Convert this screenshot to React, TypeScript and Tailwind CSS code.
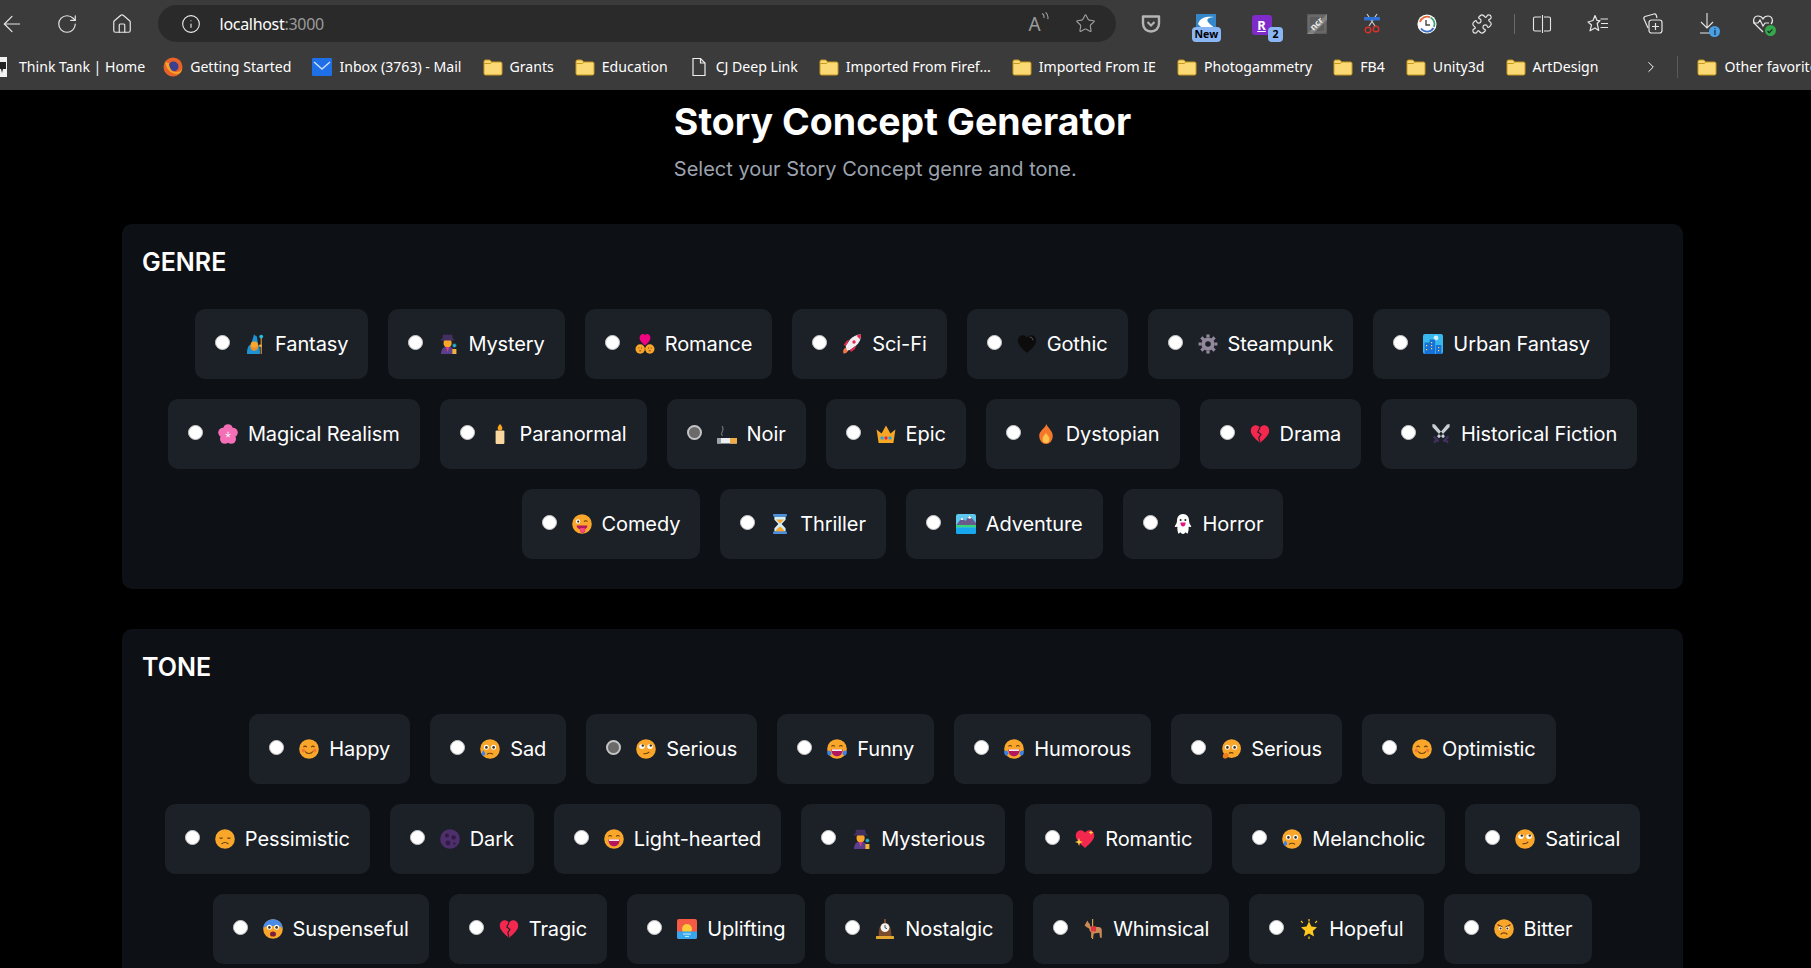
import React from 'react';
import { ArrowLeft, RotateCw, Home, Info, Star, Puzzle, ChevronRight } from 'lucide-react';

const Sv = ({ children }: { children: React.ReactNode }) => (
    <svg viewBox="0 0 20 20" className="h-5 w-5 shrink-0">{children}</svg>
);

const SKIN = '#f9a62b';
const DK = '#6b3f0a';

const Face = ({ children }: { children?: React.ReactNode }) => (
    <Sv>
        <circle cx="10" cy="10" r="9.8" fill={SKIN} />
        {children}
    </Sv>
);

const Heart = ({ fill }: { fill: string }) => (
    <path d="M10 19C4 14 .8 10.6.8 6.6.8 3.4 3.2 1.2 5.8 1.2c1.8 0 3.2 1 4.2 2.6 1-1.6 2.4-2.6 4.2-2.6 2.6 0 5 2.2 5 5.4 0 4-3.2 7.4-9.2 12.4z" fill={fill} />
);

const Smile = (
    <>
        <path d="M4.5 8.2c.8-1.4 2.4-1.4 3.2 0M12.3 8.2c.8-1.4 2.4-1.4 3.2 0" stroke={DK} strokeWidth="1.1" fill="none" />
        <circle cx="4.4" cy="11.6" r="1.8" fill="#f0653a" opacity=".7" />
        <circle cx="15.6" cy="11.6" r="1.8" fill="#f0653a" opacity=".7" />
        <path d="M6.2 12.5c1.6 2.6 6 2.6 7.6 0" stroke={DK} strokeWidth="1.1" fill="none" />
    </>
);

const WideEyes = (
    <>
        <circle cx="6.4" cy="8.2" r="2.5" fill="#fff" />
        <circle cx="13.6" cy="8.2" r="2.5" fill="#fff" />
        <circle cx="6.4" cy="8.4" r="1.3" fill="#3b2a14" />
        <circle cx="13.6" cy="8.4" r="1.3" fill="#3b2a14" />
    </>
);

const RollEyes = (
    <>
        <ellipse cx="6" cy="7.6" rx="2.8" ry="2.3" fill="#fff" />
        <ellipse cx="14" cy="7.6" rx="2.8" ry="2.3" fill="#fff" />
        <circle cx="6.8" cy="6.6" r="1.2" fill="#3b2a14" />
        <circle cx="14.8" cy="6.6" r="1.2" fill="#3b2a14" />
        <path d="M7.5 14.6c2.4.4 4.4-.2 5.8-1.8" stroke={DK} strokeWidth="1.1" fill="none" />
    </>
);

const Joy = (
    <>
        <path d="M4.5 7.6c.8-1.4 2.4-1.4 3.2 0M12.3 7.6c.8-1.4 2.4-1.4 3.2 0" stroke={DK} strokeWidth="1.1" fill="none" />
        <path d="M4.4 10.4h11.2c0 4-2.2 6.8-5.6 6.8s-5.6-2.8-5.6-6.8z" fill="#b3175e" />
        <path d="M5 10.4h10v1.5H5z" fill="#fff" />
        <path d="M.4 12.2c1.6-.8 3-.4 3.8 1 .6 1.6-.4 3.2-2 3.4-1.6-.4-2.4-2.6-1.8-4.4zM19.6 12.2c-1.6-.8-3-.4-3.8 1-.6 1.6.4 3.2 2 3.4 1.6-.4 2.4-2.6 1.8-4.4z" fill="#3b82e6" />
    </>
);

const SadTear = (
    <>
        {WideEyes}
        <path d="M7 15.4c1.6-1.6 4.4-1.6 6 0" stroke={DK} strokeWidth="1.1" fill="none" />
        <path d="M3.4 11.4c1.2 1.6 1.8 2.6 1.8 3.6a1.8 1.8 0 0 1-3.6 0c0-1 .6-2 1.8-3.6z" fill="#3b82e6" />
    </>
);

const Broken = (
    <Sv>
        <Heart fill="#f4284f" />
        <path d="M10 3.6 7.8 8l3.2 2.4-2.2 3.2 1.2 5" stroke="#1c2128" strokeWidth="1.1" fill="none" />
    </Sv>
);

const Detective = (
    <Sv>
        <path d="M3 20c0-5 2.6-7.4 6.6-7.4s6.6 2.4 6.6 7.4z" fill="#5b3f8c" />
        <path d="M8 13l1.6 5 1.6-5z" fill="#e33b86" />
        <rect x="5.6" y="5" width="8" height="8" rx="3.6" fill={SKIN} />
        <path d="M5 .8h9.2l.8 5H4.2z" fill="#443060" />
        <rect x="2.6" y="5" width="14" height="1.6" rx=".8" fill="#443060" />
        <circle cx="16.4" cy="11.6" r="2" fill="#1fb6d8" stroke="#333" strokeWidth=".6" />
        <rect x="14.4" y="15" width="4" height="5" fill="#f2b33d" />
    </Sv>
);

const EMOJI: Record<string, React.ReactNode> = {
    fantasy: (
        <Sv>
            <path d="M2 20c0-6 1.6-9 4-9.4L9 .6l3 2.2 1 7.800c1.600 1.400 2 4 2 9.400z" fill="#1f92d1" />
            <rect x="5.6" y="7.6" width="7.4" height="8.4" rx="3.4" fill={SKIN} />
            <path d="M5.600 11.400c0 4 1.400 5.400 3.600 5.400s3.800-1.400 3.800-5.400c-1 1.800-2 2-3.800 2s-2.600-.4-3.600-2z" fill="#e8912a" />
            <rect x="15.6" y="3" width="1.3" height="17" fill="#c98a3a" />
            <circle cx="16.2" cy="2.6" r="1.900" fill="#1fc1e0" />
            <rect x="14" y="10.6" width="3" height="2.4" rx="1" fill={SKIN} />
        </Sv>
    ),
    mystery: Detective,
    romance: (
        <Sv>
            <path d="M10 11.400C5.600 8 4.600 5.800 4.600 3.800 4.600 1.600 6.400 0 8 0c.8 0 1.600.4 2 1.400C10.400.4 11.200 0 12 0c1.600 0 3.400 1.600 3.400 3.800 0 2-1 4.200-5.400 7.600z" fill="#f0047f" />
            <circle cx="5.200" cy="15" r="4.700" fill={SKIN} />
            <circle cx="14.800" cy="15" r="4.700" fill={SKIN} />
            <path d="M3.400 14h1M6 14h1M13 14h1M15.600 14h1M4.200 16.800h2M13.800 16.800h2" stroke={DK} strokeWidth=".9" />
        </Sv>
    ),
    rocket: (
        <Sv>
            <path d="M1.400 19.600c-.8-3.400.4-5.600 2.600-6l2.200 2.400c-.2 2-2.200 3.800-4.800 3.600z" fill="#f2764b" />
            <path d="M5 16.400 3.600 12 8 5.400C10.600 2.400 14.400.4 19 .4c.2 4.600-1.600 8.400-4.800 11L8 16z" fill="#f3eef2" />
            <path d="M19 .4c0 1.800-.2 3.400-1 4.800L14.600 1.800c1.200-.8 2.800-1.400 4.400-1.400z" fill="#e8284f" />
            <circle cx="12" cy="8" r="1.700" fill="#e8284f" />
            <path d="M3.600 12 1.600 11l3-4 3-1.600zM8 16l1 2 4-3 1.400-3.400z" fill="#e8284f" />
        </Sv>
    ),
    blackHeart: (
        <Sv>
            <Heart fill="#0c0c0c" />
            <path d="M12.600 3c2 0 3.400 1.400 3.400 3.400" stroke="#555" strokeWidth="1" fill="none" />
        </Sv>
    ),
    gear: (
        <Sv>
            <path d="M10 .6v3M10 16.400v3M.6 10h3M16.400 10h3M3.400 3.400l2.200 2.200M14.400 14.400l2.200 2.200M16.600 3.400l-2.200 2.200M5.600 14.400l-2.200 2.200" stroke="#94899c" strokeWidth="3.200" />
            <circle cx="10" cy="10" r="6.600" fill="#94899c" />
            <circle cx="10" cy="10" r="2.800" fill="#1c2128" />
        </Sv>
    ),
    city: (
        <Sv>
            <rect x="0" y="0" width="20" height="20" rx="2" fill="#37b8ee" />
            <circle cx="13" cy="4" r="2.400" fill="#cfeffb" />
            <path d="M1.600 20V8.600h5V5.600h5.600V20zM13 20v-9h5.400v9z" fill="#1670d8" />
            <path d="M3 11h1.200v1.200H3zM8 8h1.200v1.200H8zM8 11h1.200v1.200H8zM8 14h1.200v1.200H8zM3 15h1.200v1.200H3zM15 13h1.200v1.200H15zM15 16h1.200v1.200H15z" fill="#ffd75e" />
        </Sv>
    ),
    blossom: (
        <Sv>
            <circle cx="10" cy="5" r="4.800" fill="#f56fb7" />
            <circle cx="5" cy="8.600" r="4.800" fill="#f56fb7" />
            <circle cx="15" cy="8.600" r="4.800" fill="#f56fb7" />
            <circle cx="6.800" cy="15" r="4.800" fill="#f56fb7" />
            <circle cx="13.200" cy="15" r="4.800" fill="#f56fb7" />
            <path d="M10 7.600v3M7.600 10.400 10 11l2.400-.6M8.600 13.200 10 11l1.400 2.200" stroke="#fff" strokeWidth="1" fill="none" />
        </Sv>
    ),
    candle: (
        <Sv>
            <rect x="5.600" y="6.600" width="8.800" height="13.400" rx="1" fill="#fbd7a0" />
            <path d="M10 0c1.800 2 2.400 3.200 2.400 4.200a2.400 2.400 0 0 1-4.800 0c0-1 .6-2.200 2.400-4.200z" fill="#f8a51b" />
        </Sv>
    ),
    cigarette: (
        <Sv>
            <rect x="0" y="14" width="20" height="5.600" rx="1" fill="#eceff1" />
            <rect x="0" y="14" width="4" height="5.600" fill="#9ea3a8" />
            <rect x="13" y="14" width="7" height="5.600" fill="#f2ab4a" />
            <path d="M5.400 11.800c-2.600-3 2.400-5-.2-9.600" stroke="#8d9094" strokeWidth="1" fill="none" />
        </Sv>
    ),
    crown: (
        <Sv>
            <path d="M.6 5.600 5.600 9.600 10 1.400l4.400 8.200 5-4L17.400 19H2.600z" fill="#f7a724" />
            <circle cx="6" cy="14" r="1.700" fill="#29a8e0" />
            <circle cx="10" cy="14" r="1.700" fill="#e8284f" />
            <circle cx="14" cy="14" r="1.700" fill="#29a8e0" />
        </Sv>
    ),
    fire: (
        <Sv>
            <path d="M10.400 0c.8 3.400 6.400 6.400 6.400 12a6.800 8 0 0 1-13.600 0c0-5.400 6-7.800 7.200-12z" fill="#f4772b" />
            <path d="M10 8.400c.6 2 3.400 3.600 3.400 6.600a3.400 4 0 0 1-6.800 0c0-2.800 2.800-4.400 3.400-6.600z" fill="#fcc44a" />
        </Sv>
    ),
    broken: Broken,
    swords: (
        <Sv>
            <path d="M1.400 0 4 .6l10 11.600-2 2L1.400 3zM18.600 0 16 .6 6 12.200l2 2L18.600 3z" fill="#c9ced4" />
            <path d="M2.600 12.400l5 5M17.400 12.400l-5 5M3 18.600l2.600-2.600M17 18.600 14.400 16" stroke="#43305e" strokeWidth="2.200" />
        </Sv>
    ),
    comedy: (
        <Face>
            <circle cx="6" cy="7.400" r="2.200" fill="#fff" />
            <circle cx="6.200" cy="7.600" r="1.100" fill="#3b2a14" />
            <path d="M12 7.600c1-1.200 2.400-1.200 3.400 0" stroke={DK} strokeWidth="1.100" fill="none" />
            <path d="M4.600 11.400h10.800c0 1.600-1 3-2.200 3.600.2 2.400-.8 4-2.600 4s-2.600-1.800-2.400-3.600c-2.200-.6-3.600-2.200-3.600-4z" fill="#b3175e" />
            <path d="M8 14.600c.4-.8 4.400-.8 5 0 .2 2.400-.8 4.400-2.600 4.400S7.800 17 8 14.600z" fill="#f6487f" />
        </Face>
    ),
    hourglass: (
        <Sv>
            <path d="M4.400 2.400h11.200v3.400L11.600 10l4 4.200v3.400H4.400v-3.400L8.400 10 4.400 5.800z" fill="#cfeffb" />
            <path d="M6 5.400h8L10 9.600zM5.600 17.400c.4-2.400 2.400-3.600 4.400-5 2 1.400 4 2.600 4.400 5z" fill="#f9a62b" />
            <rect x="3" y="0" width="14" height="2.600" rx="1" fill="#4a8fe0" />
            <rect x="3" y="17.400" width="14" height="2.600" rx="1" fill="#4a8fe0" />
        </Sv>
    ),
    adventure: (
        <Sv>
            <rect x="0" y="0" width="20" height="20" rx="2" fill="#5cc7ef" />
            <path d="M0 11.400 6 3.400l3.400 3.600L13.600 1.600 20 9v2.600z" fill="#6a5a8c" />
            <path d="M4.400 5.400 6 3.400l1.800 2-1.800.6zM11.800 4l1.800-2.400L15.600 4l-1.800.8z" fill="#fff" />
            <rect x="0" y="11" width="20" height="2.400" fill="#37d67a" />
            <path d="M0 13.400h20V18a2 2 0 0 1-2 2H2a2 2 0 0 1-2-2z" fill="#16a7ee" />
        </Sv>
    ),
    ghost: (
        <Sv>
            <path d="M10 0c4 0 6 3 6 6.600 0 2 .8 3.800 2.400 5.800-.8.600-1.800.6-2.800.4.2 2.600-.2 4.800-1 7-1-.4-1.600-1-2-1.600-.6.8-1 1.400-2.600 1.800-1.600-.4-2-1-2.600-1.800-.4.6-1 1.200-2 1.600-.8-2.200-1.200-4.400-1-7-1 .2-2 .2-2.800-.4C3.200 10.400 4 8.600 4 6.600 4 3 6 0 10 0z" fill="#fff" />
            <circle cx="7.600" cy="6" r="1" fill="#222" />
            <circle cx="12.400" cy="6" r="1" fill="#222" />
            <path d="M7.400 8.600h5.200c0 2.400-1.200 4-2.600 4s-2.600-1.600-2.600-4z" fill="#e3147d" />
        </Sv>
    ),
    happy: <Face>{Smile}</Face>,
    sad: <Face>{SadTear}</Face>,
    roll: <Face>{RollEyes}</Face>,
    joy: <Face>{Joy}</Face>,
    think: (
        <Sv>
            <circle cx="10.600" cy="9.600" r="9.400" fill={SKIN} />
            {WideEyes}
            <path d="M8 14.200c1.400-.8 3-.8 4.400 0" stroke={DK} strokeWidth="1.100" fill="none" />
            <path d="M3 14.600c2-1 4.200-.6 4.600 1 .2 2-1 3.800-2.800 4-2 .2-3-1-3-2.400.2-1 .4-1.800 1.200-2.600z" fill="#ef7a1e" />
        </Sv>
    ),
    down: (
        <Face>
            <path d="M4.600 8.600c.8 1 2 1 3 .2M12.400 8.800c1 .8 2.200.8 3-.2" stroke={DK} strokeWidth="1.100" fill="none" />
            <path d="M6.600 15c1.800-2 5-2 6.800 0" stroke={DK} strokeWidth="1.200" fill="none" />
        </Face>
    ),
    moon: (
        <Sv>
            <circle cx="10" cy="10" r="9.800" fill="#4f2f6b" />
            <circle cx="7" cy="6.400" r="2" fill="#2f1b45" />
            <circle cx="13.600" cy="8.400" r="2.200" fill="#2f1b45" />
            <circle cx="8" cy="14" r="2.400" fill="#2f1b45" />
            <circle cx="14.400" cy="14.600" r="1.200" fill="#2f1b45" />
        </Sv>
    ),
    grin: (
        <Face>
            <path d="M4.500 7.600c.8-1.400 2.400-1.400 3.200 0M12.300 7.600c.8-1.400 2.400-1.400 3.200 0" stroke={DK} strokeWidth="1.100" fill="none" />
            <path d="M4.400 10.400h11.200c0 4-2.200 6.800-5.600 6.800s-5.600-2.800-5.600-6.800z" fill="#b3175e" />
            <path d="M5 10.400h10v1.500H5z" fill="#fff" />
        </Face>
    ),
    sparkHeart: (
        <Sv>
            <Heart fill="#f4284f" />
            <path d="M4 9 5 12l3 1-3 1-1 3-1-3-3-1 3-1zM16 1l.7 1.800 1.800.7-1.800.7L16 6l-.7-1.800-1.800-.7 1.800-.7z" fill="#ffd23f" />
        </Sv>
    ),
    fear: (
        <Face>
            <path d="M.2 10C.2 4 4.600.2 10 .2S19.800 4 19.800 10c-1.600-2.200-2.800-3-4-3H4.200c-1.200 0-2.400.8-4 3z" fill="#4a8be8" />
            {WideEyes}
            <ellipse cx="10" cy="15" rx="3" ry="2.600" fill="#7a1f3d" />
        </Face>
    ),
    sunrise: (
        <Sv>
            <rect x="0" y="0" width="20" height="20" rx="2" fill="#f55a45" />
            <circle cx="10" cy="10" r="5" fill="#ffc93c" />
            <path d="M0 12.400h20V18a2 2 0 0 1-2 2H2a2 2 0 0 1-2-2z" fill="#37a6ee" />
            <path d="M6 15h8M8 17.400h4" stroke="#cfeffb" strokeWidth="1" />
        </Sv>
    ),
    clock: (
        <Sv>
            <path d="M3.600 17c0-4 .6-8 2-10.400C6.600 4.800 8 4 10 4s3.400.8 4.400 2.600c1.400 2.400 2 6.400 2 10.400z" fill="#7a4a2a" />
            <circle cx="10" cy="8.600" r="4.400" fill="#f4f4f4" />
            <path d="M10 6v2.800l2 .8" stroke="#333" strokeWidth=".9" fill="none" />
            <rect x="9" y="0" width="2" height="4" fill="#7a4a2a" />
            <rect x="1" y="17" width="18" height="3" rx=".6" fill="#e3a72f" />
        </Sv>
    ),
    horse: (
        <Sv>
            <rect x="9" y="0" width="1.200" height="20" fill="#d8a03a" />
            <path d="M1.600 6.600 4.400 1.600l1 1.800c1.400.8 1.800 2.200 1.800 4L15.400 8c2.400 0 3.400 1.400 3.400 3.400v7.400h-1.800l-.6-5-5.600.6-1 4.400H8l.2-5.200c-1.200-.8-1.800-2-1.800-3.800L3.800 8.200z" fill="#c98a54" />
            <rect x="8" y="7.400" width="5" height="5" fill="#e5323f" />
        </Sv>
    ),
    star: (
        <Sv>
            <path d="M10 2.600 12.400 7.600l5.600.6-4.200 3.700 1.300 5.700L10 14.600l-5.100 3 1.300-5.700L2 8.200l5.600-.6z" fill="#ffc91f" />
            <path d="M10 0v2.400M2 2l1.800 1.800M18 2l-1.800 1.800M10 17.600V20" stroke="#ffc91f" strokeWidth="1.200" />
        </Sv>
    ),
    angry: (
        <Face>
            <path d="M3.600 5.600 8.400 8M16.400 5.600 11.600 8" stroke={DK} strokeWidth="1.200" />
            <circle cx="6.400" cy="9.400" r="1.800" fill="#fff" />
            <circle cx="13.600" cy="9.400" r="1.800" fill="#fff" />
            <circle cx="6.600" cy="9.600" r="1" fill="#3b2a14" />
            <circle cx="13.400" cy="9.600" r="1" fill="#3b2a14" />
            <path d="M6.600 15.400c1.800-2 5-2 6.800 0" stroke={DK} strokeWidth="1.200" fill="none" />
        </Face>
    ),
};

const GENRES: [string, string, boolean?][] = [
    ['Fantasy', 'fantasy'], ['Mystery', 'mystery'], ['Romance', 'romance'], ['Sci-Fi', 'rocket'],
    ['Gothic', 'blackHeart'], ['Steampunk', 'gear'], ['Urban Fantasy', 'city'], ['Magical Realism', 'blossom'],
    ['Paranormal', 'candle'], ['Noir', 'cigarette', true], ['Epic', 'crown'], ['Dystopian', 'fire'],
    ['Drama', 'broken'], ['Historical Fiction', 'swords'], ['Comedy', 'comedy'], ['Thriller', 'hourglass'],
    ['Adventure', 'adventure'], ['Horror', 'ghost'],
];

const TONES: [string, string, boolean?][] = [
    ['Happy', 'happy'], ['Sad', 'sad'], ['Serious', 'roll', true], ['Funny', 'joy'], ['Humorous', 'joy'],
    ['Serious', 'think'], ['Optimistic', 'happy'], ['Pessimistic', 'down'], ['Dark', 'moon'], ['Light-hearted', 'grin'],
    ['Mysterious', 'mystery'], ['Romantic', 'sparkHeart'], ['Melancholic', 'sad'], ['Satirical', 'roll'],
    ['Suspenseful', 'fear'], ['Tragic', 'broken'], ['Uplifting', 'sunrise'], ['Nostalgic', 'clock'],
    ['Whimsical', 'horse'], ['Hopeful', 'star'], ['Bitter', 'angry'],
];

function OptionGroup({ title, items }: { title: string; items: [string, string, boolean?][] }) {
    return (
        <section className="rounded-[10px] bg-[#0d1015] px-5 pt-[22px] pb-[30px]">
            <h2 className="mb-[31px] text-[25px] leading-8 font-semibold text-white">{title}</h2>
            <div className="flex flex-wrap justify-center gap-5">
                {items.map(([label, icon, checked], i) => (
                    <label key={label + i} className="flex h-[70px] items-center rounded-[10px] bg-[#1c2128] px-5 text-xl tracking-[-0.1px] text-white">
                        <input
                            type="radio"
                            name={title}
                            defaultChecked={checked}
                            className="-mt-1 mr-[15px] h-[15px] w-[15px] shrink-0 appearance-none rounded-full border border-[#c8c8c8] bg-white checked:border-2 checked:border-[#c4c4c4] checked:bg-[#6a6a6a]"
                        />
                        <span className="mr-[10px]">{EMOJI[icon]}</span>
                        {label}
                    </label>
                ))}
            </div>
        </section>
    );
}

const Folder = () => (
    <svg viewBox="0 0 20 20" className="h-5 w-5 shrink-0">
        <path d="M1 4.500A1.500 1.500 0 0 1 2.500 3h4.200l2 2h8.800A1.500 1.500 0 0 1 19 6.500v10a1.500 1.500 0 0 1-1.500 1.500h-15A1.500 1.500 0 0 1 1 16.500z" fill="#fbd975" stroke="#c7991d" strokeWidth="1" />
        <path d="M1.500 6.500h6l1.400-1.500" stroke="#c7991d" strokeWidth="1" fill="none" />
    </svg>
);

const BOOKMARKS: [string, string][] = [
    ['Getting Started', 'firefox'], ['Inbox (3763) - Mail', 'mail'], ['Grants', 'folder'], ['Education', 'folder'],
    ['CJ Deep Link', 'doc'], ['Imported From Firef...', 'folder'], ['Imported From IE', 'folder'], ['Photogammetry', 'folder'],
    ['FB4', 'folder'], ['Unity3d', 'folder'], ['ArtDesign', 'folder'],
];

function BookmarkIcon({ kind }: { kind: string }) {
    if (kind === 'firefox') {
        return (
            <svg viewBox="0 0 20 20" className="h-5 w-5 shrink-0">
                <circle cx="10" cy="10" r="9.500" fill="#e8622a" />
                <circle cx="10.500" cy="9.500" r="5" fill="#3a3f8f" />
                <path d="M2 5c1 6 5 12 12 12 3 0 5-3 5-6-1 3-3 4-6 4-4 0-7-4-7-9z" fill="#f7a425" />
            </svg>
        );
    }
    if (kind === 'mail') {
        return (
            <svg viewBox="0 0 20 20" className="h-5 w-5 shrink-0">
                <rect x="0" y="1" width="20" height="18" rx="1" fill="#1f6fe8" />
                <path d="M2 5l8 7 8-7" stroke="#cfe0fa" strokeWidth="1.400" fill="none" />
            </svg>
        );
    }
    if (kind === 'doc') {
        return (
            <svg viewBox="0 0 20 20" className="h-5 w-5 shrink-0">
                <path d="M4 1.500h7.500L16 6v12.500H4z" fill="none" stroke="#eee" strokeWidth="1.200" />
                <path d="M11.500 1.500V6H16" fill="none" stroke="#eee" strokeWidth="1.200" />
            </svg>
        );
    }
    return <Folder />;
}

function Bookmark({ label, kind }: { label: string; kind: string }) {
    return (
        <div className="flex shrink-0 items-center gap-[7px]">
            <BookmarkIcon kind={kind} />
            <span>{label}</span>
        </div>
    );
}

const Slot = ({ children }: { children: React.ReactNode }) => (
    <div className="relative flex h-full w-[55.200px] shrink-0 items-center justify-center">{children}</div>
);

const IC = 'h-[22px] w-[22px] text-[#e6e6e6]';

function BrowserChrome() {
    return (
        <div className="h-[90px] shrink-0 overflow-hidden bg-[#3b3b3b] font-['Noto_Sans',sans-serif] text-white">
            <div className="flex h-[46px] items-center pt-[1px]">
                <div className="-ml-4 flex h-full">
                    <Slot><ArrowLeft className="h-[26px] w-[26px] text-[#e6e6e6]" strokeWidth={1.100} /></Slot>
                    <Slot><RotateCw className={IC} strokeWidth={1.300} /></Slot>
                    <Slot><Home className={IC} strokeWidth={1.300} /></Slot>
                </div>
                <div className="ml-[8px] flex h-[37px] w-[958px] shrink-0 items-center rounded-full bg-[#2a2a2a] pl-[23px] pr-[20px]">
                    <Info className="h-5 w-5 text-[#eee]" strokeWidth={1.300} />
                    <span className="ml-[19px] text-[16px] tracking-[-0.3px] text-white">localhost<span className="text-[#9a9a9a]">:3000</span></span>
                    <div className="ml-auto flex items-center gap-[25px] text-[#9c9c9c]">
                        <div className="flex items-start">
                            <span className="text-[19px] leading-6">A</span>
                            <svg viewBox="0 0 8 10" className="h-[12px] w-[9px]"><path d="M1 1c1.500 1 2 2.500 1.500 4M4 0c2 1.500 2.600 3.500 2 6" stroke="#9c9c9c" fill="none" /></svg>
                        </div>
                        <Star className="h-[21px] w-[21px]" strokeWidth={1.300} />
                    </div>
                </div>
                <div className="ml-2 flex h-full">
                    <Slot>
                        <svg viewBox="0 0 20 20" className="h-5 w-5">
                            <path d="M2 2.500h16v7c0 5-3.600 8-8 8s-8-3-8-8z" fill="none" stroke="#b5b5b5" strokeWidth="2.400" strokeLinejoin="round" />
                            <path d="M6.500 8 10 11.500 13.500 8" fill="none" stroke="#b5b5b5" strokeWidth="2" />
                        </svg>
                    </Slot>
                    <Slot>
                        <svg viewBox="0 0 20 14" className="absolute top-[13px] h-[14px] w-5">
                            <rect width="20" height="14" fill="#3587c9" />
                            <path d="M2 10C4 3 12 2 18 3c-5 .5-8 2-6 5 1 2 4 3 6 6H6z" fill="#fff" />
                        </svg>
                        <span className="absolute top-[26px] rounded-[4px] bg-[#8ab6f4] px-[3px] text-[10.500px] font-bold leading-[15px] text-black">New</span>
                    </Slot>
                    <Slot>
                        <span className="absolute top-[14px] flex h-5 w-5 items-center justify-center rounded-[3px] bg-[#7e2bc9] text-[13px] font-bold leading-none text-white underline">R</span>
                        <span className="absolute left-[34px] top-[26px] flex h-[15px] w-[15px] items-center justify-center rounded-[4px] bg-[#8ab6f4] text-[10.500px] font-bold leading-none text-black">2</span>
                    </Slot>
                    <Slot>
                        <svg viewBox="0 0 20 20" className="h-5 w-5">
                            <rect width="20" height="20" fill="#5c5c5c" />
                            <path d="M0 20 20 0v6L6 20z" fill="#8a8a8a" />
                            <path d="M2 2h16v16H2z" fill="none" stroke="#777" />
                        </svg>
                        <span className="absolute -rotate-45 text-[9px] font-bold leading-none text-[#e8e8e8]">ncr</span>
                    </Slot>
                    <Slot>
                        <svg viewBox="0 0 20 22" className="h-[22px] w-5">
                            <path d="M5 1l8 12M15 1 7 13" stroke="#ccc" strokeWidth="1.200" />
                            <rect x="2" y="4" width="16" height="3.400" fill="#2e72d8" />
                            <circle cx="6" cy="17" r="2.800" fill="none" stroke="#d8322d" strokeWidth="1.400" />
                            <circle cx="14" cy="16" r="2.800" fill="none" stroke="#d8322d" strokeWidth="1.400" />
                        </svg>
                    </Slot>
                    <Slot>
                        <svg viewBox="0 0 20 20" className="h-5 w-5">
                            <circle cx="10" cy="10" r="9.600" fill="#fff" />
                            <path d="M3 8a7.500 7.500 0 0 1 10-4.800" stroke="#e56b3c" strokeWidth="1.800" fill="none" />
                            <path d="M13.500 3.500A7.500 7.500 0 0 1 17 13" stroke="#3ba37e" strokeWidth="1.800" fill="none" />
                            <path d="M16.500 14A7.500 7.500 0 0 1 4 14.500" stroke="#3a6fc4" strokeWidth="1.800" fill="none" />
                            <path d="M9 6v5h4" stroke="#444" strokeWidth="1.400" fill="none" />
                        </svg>
                    </Slot>
                    <Slot><Puzzle className={IC} strokeWidth={1.300} /></Slot>
                </div>
                <div className="ml-1 h-[20px] w-px shrink-0 bg-[#6a6a6a]" />
                <div className="flex h-full">
                    <Slot>
                        <svg viewBox="0 0 20 20" className="h-5 w-5" fill="none" stroke="#e6e6e6" strokeWidth="1.100">
                            <path d="M9 3H3a1.500 1.500 0 0 0-1.500 1.500v11A1.500 1.500 0 0 0 3 17h6M12 3h5a1.500 1.500 0 0 1 1.500 1.500v11A1.500 1.500 0 0 1 17 17h-5M10.500 1v18" />
                        </svg>
                    </Slot>
                    <Slot>
                        <svg viewBox="0 0 22 20" className="h-5 w-[22px]" fill="none" stroke="#e6e6e6" strokeWidth="1.200">
                            <path d="M8 1.500l2 5h3l-2.800 3 1.500 7-3.700-2.500-5 2.800 1.500-5.800L1 8l5-1.500z" strokeLinejoin="round" />
                            <path d="M13.500 5H21M14 9.500h7M13.500 13.500H21" />
                        </svg>
                    </Slot>
                    <Slot>
                        <svg viewBox="0 0 22 22" className="h-[22px] w-[22px]" fill="none" stroke="#e6e6e6" strokeWidth="1.200">
                            <path d="M6 15 2 6c-.5-1 0-2 1-2.500L12 1c1-.2 1.800.2 2.200 1L15 5" />
                            <rect x="7" y="7" width="13" height="13" rx="2.500" />
                            <path d="M13.500 10v7M10 13.500h7" />
                        </svg>
                    </Slot>
                    <Slot>
                        <svg viewBox="0 0 22 24" className="h-6 w-[22px]" fill="none" stroke="#e6e6e6" strokeWidth="1.100">
                            <path d="M10 1v15M4 10l6 6 6-6M3 21h14" />
                        </svg>
                        <span className="absolute left-[29px] top-[25px] flex h-[11px] w-[11px] items-center justify-center rounded-full bg-[#4aa0e6] text-[8px] font-bold leading-none text-[#12324f]">i</span>
                    </Slot>
                    <Slot>
                        <svg viewBox="0 0 22 20" className="h-5 w-[22px]" fill="none" stroke="#e6e6e6" strokeWidth="1.200">
                            <path d="M11 18 3 10C0 7 2 2 6 2c2 0 4 1 5 3 1-2 3-3 5-3 4 0 6 5 3 8" />
                            <path d="M1 9h5l2-3 3 6 2-3h4" />
                        </svg>
                        <span className="absolute left-[29px] top-[24px] flex h-[11px] w-[11px] items-center justify-center rounded-full bg-[#36a84a]">
                            <svg viewBox="0 0 10 10" className="h-2 w-2"><path d="M2 5l2 2 4-4" stroke="#123" strokeWidth="1.400" fill="none" /></svg>
                        </span>
                    </Slot>
                    <Slot>
                        <span className="ml-[48px] h-[3px] w-[3px] rounded-full bg-[#e6e6e6]" />
                    </Slot>
                </div>
            </div>
            <div className="-mt-[1px] flex h-[44px] items-center whitespace-nowrap text-[14.100px]">
                <svg viewBox="0 0 20 20" className="-ml-[13px] mr-[12px] h-5 w-5 shrink-0">
                    <rect width="20" height="20" fill="#f2f2f2" />
                    <path d="M13 5h6v7h-3l-1 4-1-4h-1z" fill="#222" />
                </svg>
                <span className="mr-[18px]">Think Tank | Home</span>
                <div className="flex gap-[21px]">
                    {BOOKMARKS.map(([label, kind]) => <Bookmark key={label} label={label} kind={kind} />)}
                </div>
                <ChevronRight className="ml-[44px] h-[18px] w-[18px] shrink-0" strokeWidth={1.300} />
                <div className="ml-[17px] mr-[19px] h-[22px] w-px shrink-0 bg-[#5a5a5a]" />
                <Bookmark label="Other favorites" kind="folder" />
            </div>
        </div>
    );
}

export default function App() {
    return (
        <div className="flex h-screen flex-col overflow-hidden bg-black font-['Inter',sans-serif]">
            <BrowserChrome />
            <main className="pl-[122px] pr-[128px]">
                <div className="flex justify-center pt-3">
                    <div>
                        <h1 className="text-[37.500px] leading-10 font-bold text-white">Story Concept Generator</h1>
                        <p className="mt-[13px] text-xl text-[#9ca3af]">Select your Story Concept genre and tone.</p>
                    </div>
                </div>
                <div className="mt-[41px] flex flex-col gap-10">
                    <OptionGroup title="GENRE" items={GENRES} />
                    <OptionGroup title="TONE" items={TONES} />
                </div>
            </main>
        </div>
    );
}
